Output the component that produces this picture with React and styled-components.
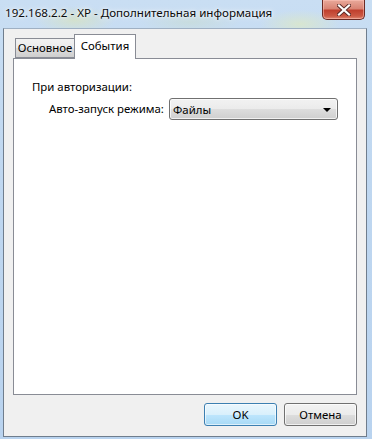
import styled, { createGlobalStyle } from "styled-components";

const Global = createGlobalStyle`
    html, body {
        margin: 0;
        padding: 0;
        width: 372px;
        height: 439px;
        overflow: hidden;
    }
    body {
        font-family: "Noto Sans", "DejaVu Sans", sans-serif;
        font-size: 11.4px;
        color: #000;
    }
`

const Window = styled.div`
    width: 372px;
    height: 439px;
    box-sizing: border-box;
    display: flex;
    flex-direction: column;
    background:
        radial-gradient(ellipse 40px 14px at 75px 20px, rgba(214, 226, 196, 0.8), transparent),
        radial-gradient(ellipse 50px 12px at 190px 22px, rgba(200, 220, 214, 0.7), transparent),
        radial-gradient(ellipse 40px 14px at 300px 24px, rgba(220, 232, 200, 0.8), transparent),
        linear-gradient(180deg, #c9def3 0%, #bfd7f0 40%, #b9d3ef 100%);
`

const TitleBar = styled.div`
    height: 28px;
    flex: none;
    display: flex;
    align-items: flex-start;
    justify-content: space-between;
    padding-left: 5px;
    box-sizing: border-box;
`

const Title = styled.div`
    padding-top: 5px;
    font-size: 11.6px;
    line-height: 16px;
    color: #0b0b0b;
    text-shadow: 0 0 6px rgba(255, 255, 255, 0.9), 0 0 3px rgba(255, 255, 255, 0.9);
    white-space: nowrap;
`

const CloseButton = styled.div`
    width: 43px;
    height: 20px;
    margin-right: 7px;
    box-sizing: border-box;
    border: 1px solid #6a2a24;
    border-top: none;
    border-radius: 0 0 5px 5px;
    background: linear-gradient(180deg, #e9a99b 0%, #d98474 45%, #c0402e 55%, #cc5a45 85%, #e08b76 100%);
    box-shadow: inset 0 0 0 1px rgba(255, 200, 190, 0.5);
    display: flex;
    align-items: center;
    justify-content: center;
`

const Client = styled.div`
    flex: 1;
    margin: 0 5px 2px 3px;
    background: #f0f0f0;
    border: 1px solid #6f7d8d;
    border-top-color: #9fb0c3;
    display: flex;
    flex-direction: column;
    padding: 5px 9px 0 9px;
    box-sizing: border-box;
`

const TabStrip = styled.div`
    display: flex;
    align-items: flex-end;
    height: 24px;
    padding-left: 2px;
    position: relative;
    z-index: 1;
`

const Tab = styled.div`
    box-sizing: border-box;
    width: ${p => p.$width}px;
    border: 1px solid #898c95;
    border-bottom: ${p => (p.$active ? "none" : "1px solid #898c95")};
    height: ${p => (p.$active ? "25px" : "20px")};
    margin-bottom: ${p => (p.$active ? "-1px" : "0")};
    margin-left: ${p => (p.$active ? "-1px" : "0")};
    padding-top: ${p => (p.$active ? "3px" : "1px")};
    text-align: center;
    background: ${p => (p.$active ? "#fff" : "linear-gradient(180deg, #f2f2f2 0%, #ebebeb 50%, #dddddd 51%, #cfcfcf 100%)")};
    line-height: 16px;
    white-space: nowrap;
`

const Panel = styled.div`
    height: 337px;
    background: #fff;
    border: 1px solid #898c95;
    box-sizing: border-box;
    padding: 20px 0 0 18px;
`

const GroupLabel = styled.div`
    line-height: 16px;
`

const FieldRow = styled.div`
    display: flex;
    align-items: center;
    margin-top: 3px;
    padding-left: 17px;
`

const FieldLabel = styled.div`
    width: 120px;
    flex: none;
    white-space: nowrap;
    line-height: 16px;
`

const Select = styled.div`
    width: 169px;
    height: 22px;
    box-sizing: border-box;
    border: 1px solid #707070;
    border-radius: 3px;
    background: linear-gradient(180deg, #f2f2f2 0%, #ebebeb 50%, #dddddd 51%, #cfcfcf 100%);
    box-shadow: inset 0 0 0 1px rgba(255, 255, 255, 0.7);
    display: flex;
    align-items: center;
    justify-content: space-between;
    padding: 0 6px 0 3px;
`

const Arrow = styled.span`
    width: 0;
    height: 0;
    border-left: 4px solid transparent;
    border-right: 4px solid transparent;
    border-top: 4px solid #000;
    margin-top: 1px;
`

const ButtonRow = styled.div`
    display: flex;
    justify-content: flex-end;
    gap: 7px;
    margin-top: 8px;
`

const Button = styled.div`
    width: 73px;
    height: 23px;
    box-sizing: border-box;
    border: 1px solid ${p => (p.$default ? "#3c7fb1" : "#707070")};
    border-radius: 3px;
    background: ${p => (p.$default
        ? "linear-gradient(180deg, #eaf6fd 0%, #d9f0fc 50%, #bee6fd 51%, #a7d9f5 100%)"
        : "linear-gradient(180deg, #f2f2f2 0%, #ebebeb 50%, #dddddd 51%, #cfcfcf 100%)")};
    box-shadow: inset 0 0 0 1px ${p => (p.$default ? "rgba(255, 255, 255, 0.6)" : "rgba(255, 255, 255, 0.7)")};
    display: flex;
    align-items: center;
    justify-content: center;
    line-height: 16px;
`

const App = () => {
    return (
        <Window>
            <Global />
            <TitleBar>
                <Title>192.168.2.2 - XP - Дополнительная информация</Title>
                <CloseButton>
                    <svg width="14" height="12" viewBox="0 0 14 12">
                        <path d="M2 1.5 L12 10.5 M12 1.5 L2 10.5" stroke="#5a2a26" strokeWidth="4" strokeLinecap="square" />
                        <path d="M2 1.5 L12 10.5 M12 1.5 L2 10.5" stroke="#fff" strokeWidth="2.2" strokeLinecap="square" />
                    </svg>
                </CloseButton>
            </TitleBar>
            <Client>
                <TabStrip>
                    <Tab $width={60}>Основное</Tab>
                    <Tab $active $width={62}>События</Tab>
                </TabStrip>
                <Panel>
                    <GroupLabel>При авторизации:</GroupLabel>
                    <FieldRow>
                        <FieldLabel>Авто-запуск режима:</FieldLabel>
                        <Select>
                            <span>Файлы</span>
                            <Arrow />
                        </Select>
                    </FieldRow>
                </Panel>
                <ButtonRow>
                    <Button $default>OK</Button>
                    <Button>Отмена</Button>
                </ButtonRow>
            </Client>
        </Window>
    );
}

export default App;
